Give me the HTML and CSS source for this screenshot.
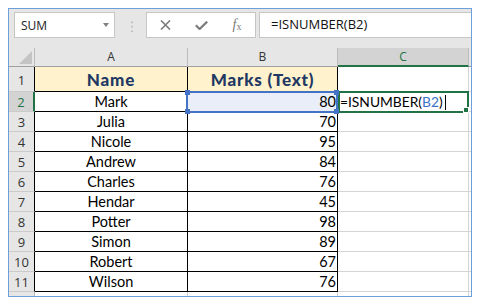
FILE: index.html
```html
<!DOCTYPE html>
<html lang="en">
<head>
    <meta charset="UTF-8">
    <title>ISNUMBER</title>
    <link rel="stylesheet" href="styles.css">
</head>
<body>
    <div class="window">
        <div class="formula-bar">
            <div class="name-box"><span>SUM</span><span class="caret"></span></div>
            <div class="grip"></div>
            <div class="fx-buttons">
                <svg width="11" height="10" viewBox="0 0 11 10"><path d="M1 0.5 L10 9.5 M10 0.5 L1 9.5" stroke="#7b7b7b" stroke-width="1.6" fill="none"/></svg>
                <svg width="13" height="9" viewBox="0 0 13 9"><path d="M0.8 4.2 L4.6 8 L12.2 0.6" stroke="#7b7b7b" stroke-width="2.2" fill="none"/></svg>
                <span class="fx"><i>f</i><sub>x</sub></span>
            </div>
            <div class="formula-input">=ISNUMBER(B2)</div>
        </div>

        <div class="sheet">
            <div class="corner"></div>
            <div class="ch">A</div>
            <div class="ch">B</div>
            <div class="ch active-col">C</div>
            <div class="ch"></div>

            <div class="rh tall">1</div>
            <div class="cell tb title">Name</div>
            <div class="cell tb title">Marks (Text)</div>
            <div class="cell"></div>
            <div class="cell"></div>

            <div class="rh active-row">2</div>
            <div class="cell tb">Mark</div>
            <div class="cell tb num ref">80<span class="h tl"></span><span class="h tr"></span><span class="h bl"></span><span class="h br"></span></div>
            <div class="cell editing">=ISNUMBER(<span class="ref-text">B2</span>)<span class="cursor"></span></div>
            <div class="cell"></div>

            <div class="rh">3</div>
            <div class="cell tb">Julia</div>
            <div class="cell tb num">70</div>
            <div class="cell"></div>
            <div class="cell"></div>

            <div class="rh">4</div>
            <div class="cell tb">Nicole</div>
            <div class="cell tb num">95</div>
            <div class="cell"></div>
            <div class="cell"></div>

            <div class="rh">5</div>
            <div class="cell tb">Andrew</div>
            <div class="cell tb num">84</div>
            <div class="cell"></div>
            <div class="cell"></div>

            <div class="rh">6</div>
            <div class="cell tb">Charles</div>
            <div class="cell tb num">76</div>
            <div class="cell"></div>
            <div class="cell"></div>

            <div class="rh">7</div>
            <div class="cell tb">Hendar</div>
            <div class="cell tb num">45</div>
            <div class="cell"></div>
            <div class="cell"></div>

            <div class="rh">8</div>
            <div class="cell tb">Potter</div>
            <div class="cell tb num">98</div>
            <div class="cell"></div>
            <div class="cell"></div>

            <div class="rh">9</div>
            <div class="cell tb">Simon</div>
            <div class="cell tb num">89</div>
            <div class="cell"></div>
            <div class="cell"></div>

            <div class="rh">10</div>
            <div class="cell tb">Robert</div>
            <div class="cell tb num">67</div>
            <div class="cell"></div>
            <div class="cell"></div>

            <div class="rh">11</div>
            <div class="cell tb">Wilson</div>
            <div class="cell tb num">76</div>
            <div class="cell"></div>
            <div class="cell"></div>

            <div class="rh plain"></div>
            <div class="cell"></div>
            <div class="cell"></div>
            <div class="cell"></div>
            <div class="cell"></div>
        </div>
    </div>
</body>
</html>
```

FILE: styles.css
```css
body {
    margin: 0;
    background: #fff;
    font-family: "Open Sans", sans-serif;
}
.window {
    margin: 8px;
    width: 464px;
    height: 289px;
    border: 1px solid #6f9edb;
    box-sizing: border-box;
    overflow: hidden;
    background: #fff;
}

/* formula bar */
.formula-bar {
    display: flex;
    align-items: flex-start;
    height: 39px;
    padding: 3px 0 0 5px;
    box-sizing: border-box;
    background: #e6e6e6;
}
.name-box {
    width: 101px;
    height: 26px;
    box-sizing: border-box;
    border: 1px solid #c6c6c6;
    background: #fff;
    display: flex;
    align-items: center;
    justify-content: space-between;
    padding: 0 5px 0 6px;
    font-size: 12px;
    color: #222;
}
.caret {
    width: 0;
    height: 0;
    border-left: 3.5px solid transparent;
    border-right: 3.5px solid transparent;
    border-top: 4px solid #808080;
}
.grip {
    width: 2px;
    height: 12px;
    margin: 8px 0 0 16px;
    background: radial-gradient(circle, #b4b4b4 0.8px, transparent 1.1px) 0 0 / 2px 4.5px;
}
.fx-buttons {
    width: 110px;
    height: 26px;
    margin-left: 13px;
    box-sizing: border-box;
    border: 1px solid #c6c6c6;
    background: #fff;
    display: grid;
    grid-template-columns: repeat(3, 1fr);
    align-items: center;
    justify-items: center;
}
.fx {
    font-family: "Liberation Serif", serif;
    font-size: 14px;
    color: #7b7b7b;
    line-height: 1;
}
.fx sub {
    font-size: 10px;
    vertical-align: -1px;
}
.formula-input {
    flex: 1;
    height: 26px;
    margin-left: 3px;
    box-sizing: border-box;
    border: 1px solid #c6c6c6;
    border-right: none;
    background: #fff;
    padding-left: 11px;
    font-size: 13px;
    line-height: 23px;
    color: #111;
}

/* sheet */
.sheet {
    display: grid;
    grid-template-columns: 26px 153px 150px 131px 1fr;
    grid-template-rows: 19px 25px repeat(11, 20px);
    font-family: "Lato", sans-serif;
    font-size: 14.5px;
}
.sheet > div {
    box-sizing: border-box;
    border-right: 1px solid #d4d4d4;
    border-bottom: 1px solid #d4d4d4;
}
.corner {
    background: #e6e6e6;
    position: relative;
}
.sheet > .corner {
    border-right-color: #bcbcbc;
    border-bottom-color: #9f9f9f;
}
.corner::after {
    content: "";
    position: absolute;
    right: 2px;
    bottom: 2px;
    width: 0;
    height: 0;
    border-left: 13px solid transparent;
    border-bottom: 13px solid #c4c4c4;
}
.sheet > .ch {
    background: #e6e6e6;
    border-right-color: #bcbcbc;
    border-bottom-color: #9f9f9f;
    font-family: "Open Sans", sans-serif;
    font-size: 12px;
    color: #333;
    text-align: center;
    line-height: 18px;
}
.sheet > .ch.active-col {
    background: #d3d3d3;
    color: #217346;
    border-bottom: 2px solid #217346;
    line-height: 17px;
}
.sheet > .rh {
    background: #e6e6e6;
    border-right-color: #000;
    border-bottom-color: #cbcbcb;
    font-family: "Open Sans", sans-serif;
    font-size: 13px;
    color: #333;
    text-align: center;
    line-height: 20px;
}
.sheet > .rh.tall {
    line-height: 26px;
}
.sheet > .rh.plain {
    border-right-color: #bcbcbc;
}
.sheet > .rh.active-row {
    background: #d3d3d3;
    color: #217346;
    border-right: 2px solid #217346;
}
.cell {
    line-height: 20px;
    padding: 0 2px;
    white-space: nowrap;
    position: relative;
}
.sheet > .tb {
    border-right-color: #000;
    border-bottom-color: #000;
    text-align: center;
    color: #000;
}
.sheet > .title {
    background: #fff2cc;
    font-weight: 900;
    font-size: 17px;
    letter-spacing: 0.8px;
    color: #1f3864;
    line-height: 25px;
}
.sheet > .num {
    text-align: right;
    padding-right: 1px;
}
.ref {
    background: #e9eef8;
}
.ref::after {
    content: "";
    position: absolute;
    top: -1px;
    left: -2px;
    right: -1px;
    bottom: -2px;
    border: 2px solid #4472c4;
}
.h {
    position: absolute;
    width: 5px;
    height: 5px;
    background: #4472c4;
    z-index: 2;
}
.h.tl { top: -2px; left: -3px; }
.h.tr { top: -2px; right: -2px; }
.h.bl { bottom: -3px; left: -3px; }
.h.br { bottom: -3px; right: -2px; }
.editing {
    z-index: 1;
    font-size: 13.8px;
}
.editing::after {
    content: "";
    position: absolute;
    top: -1px;
    left: 0;
    right: -1px;
    bottom: -2px;
    border: 2px solid #217346;
}
.editing::before {
    content: "";
    position: absolute;
    right: -1px;
    bottom: -2px;
    width: 4px;
    height: 4px;
    background: #217346;
    border: 1px solid #fff;
    z-index: 2;
}
.ref-text {
    color: #3c73c8;
}
.cursor {
    display: inline-block;
    width: 1px;
    height: 15px;
    margin-left: 2px;
    background: #000;
    vertical-align: -3px;
}
```
